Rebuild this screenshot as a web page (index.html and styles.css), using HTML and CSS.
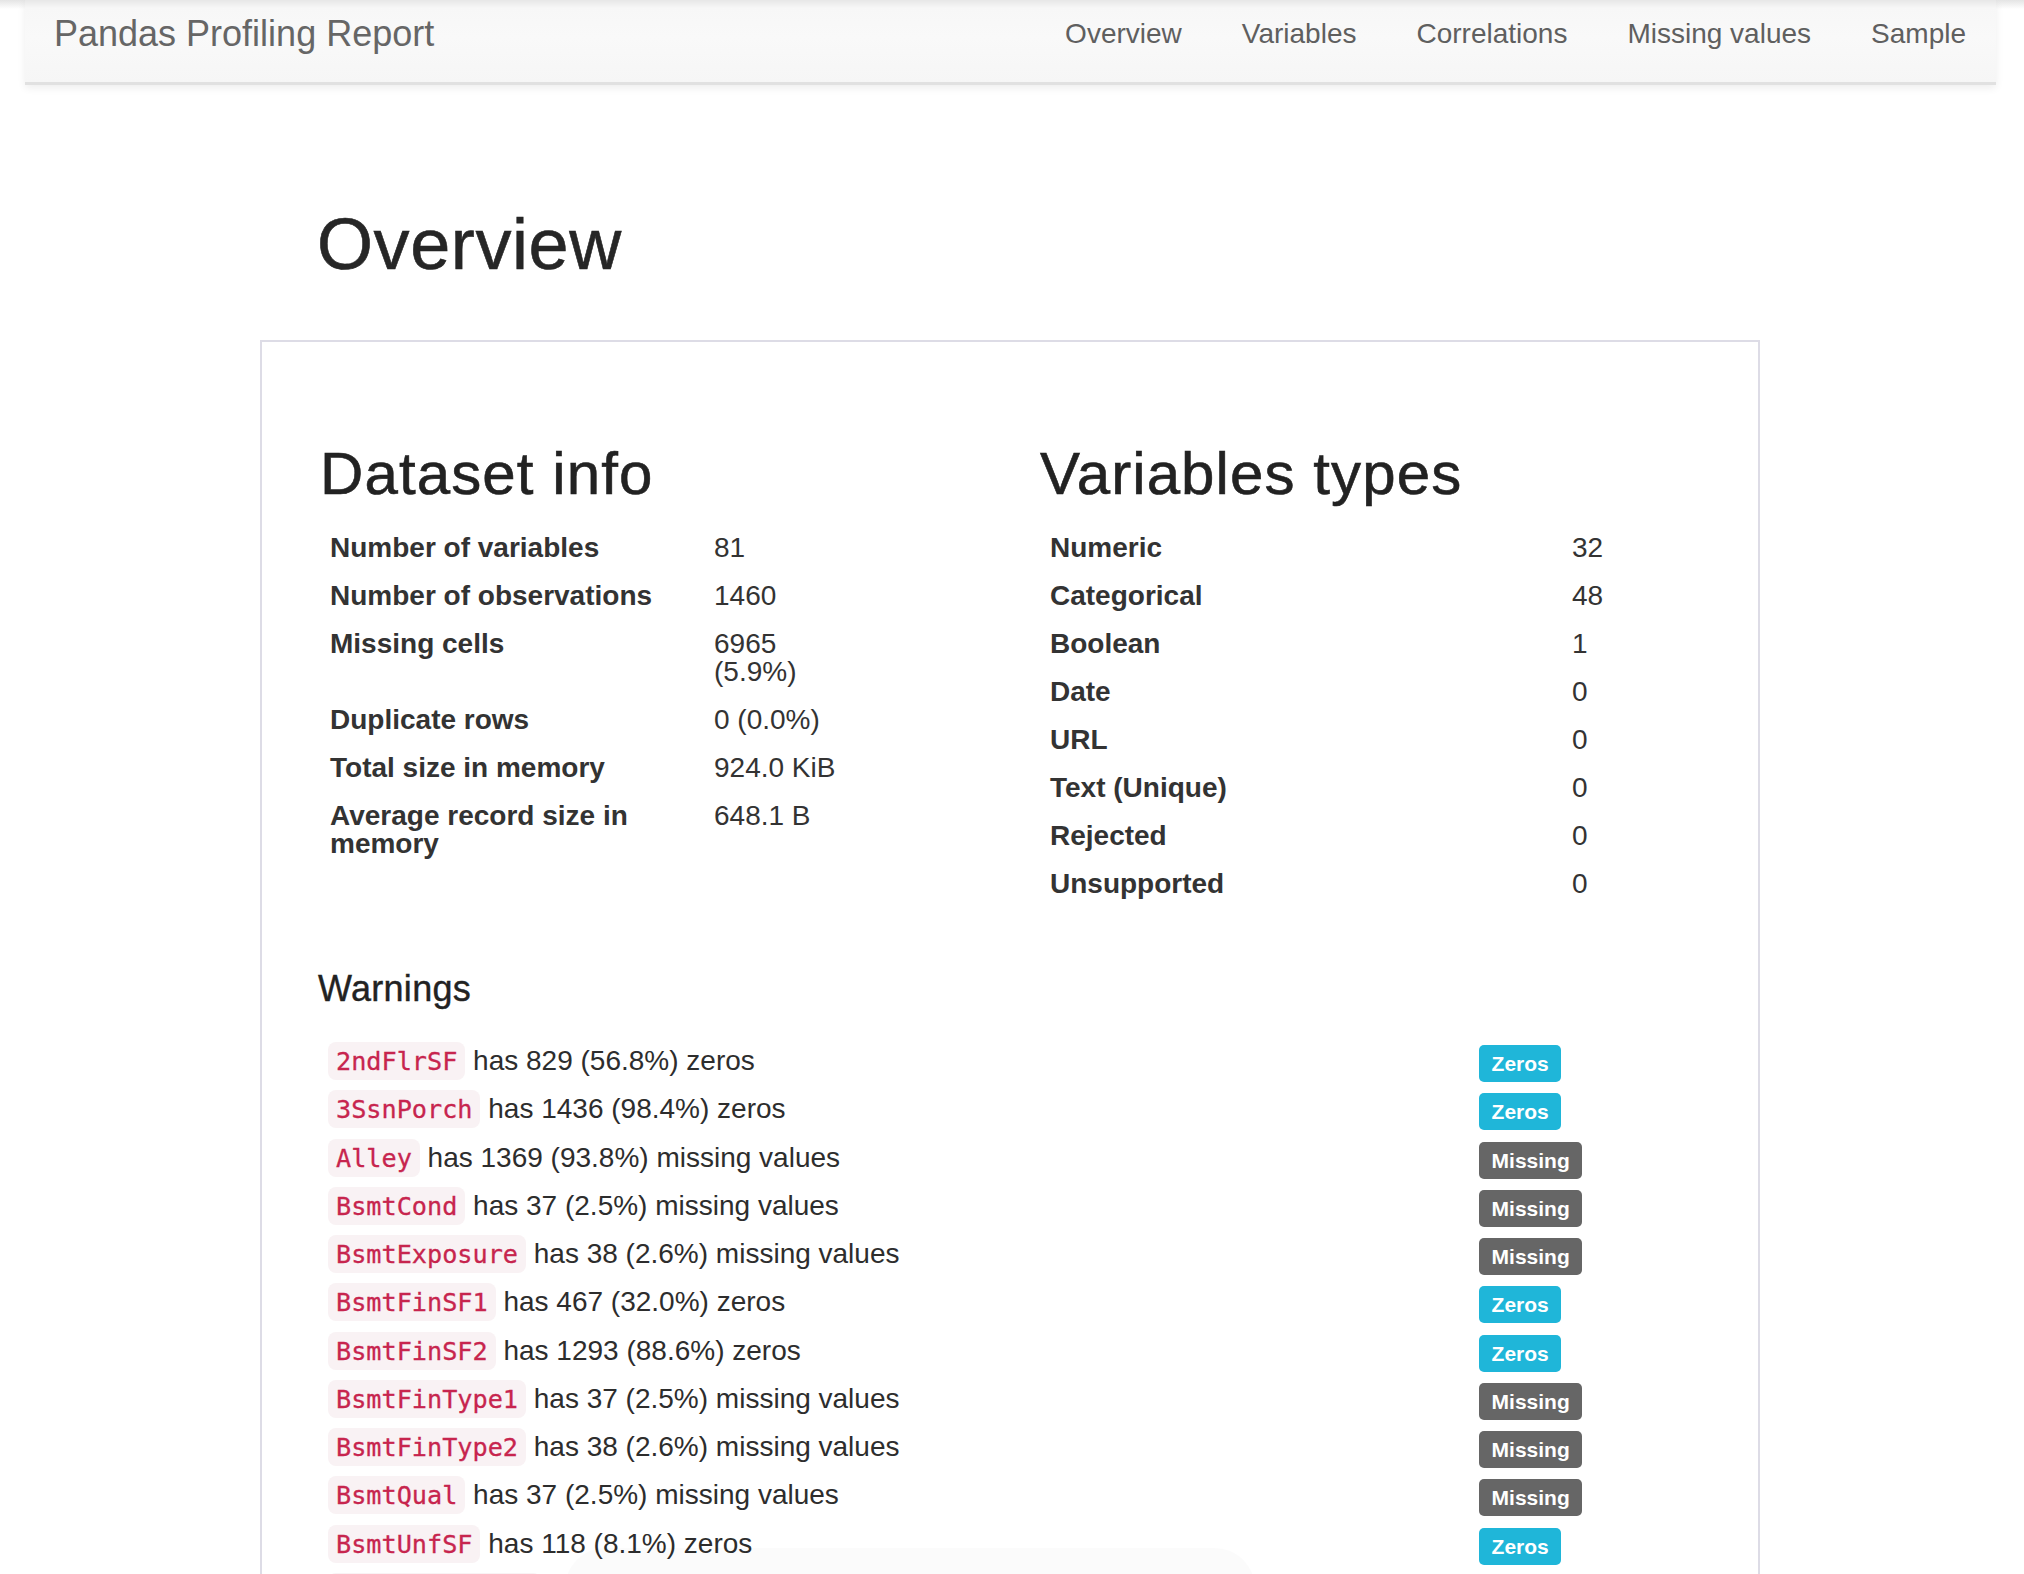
FILE: index.html
```html
<!DOCTYPE html>
<html lang="en">
<head>
<meta charset="utf-8">
<title>Pandas Profiling Report</title>
<link rel="stylesheet" href="styles.css">
</head>
<body>
<nav class="navbar">
  <a class="brand" href="#">Pandas Profiling Report</a>
  <ul class="nav">
    <li><a href="#overview">Overview</a></li>
    <li><a href="#variables">Variables</a></li>
    <li><a href="#correlations">Correlations</a></li>
    <li><a href="#missing">Missing values</a></li>
    <li><a href="#sample">Sample</a></li>
  </ul>
</nav>
<main class="content" id="overview">
  <h1 class="page-title">Overview</h1>
  <section class="panel">
    <div class="col col-left">
      <h2 class="section-title">Dataset info</h2>
      <table class="stats stats-dataset">
        <tr><th>Number of variables</th><td>81</td></tr>
        <tr><th>Number of observations</th><td>1460</td></tr>
        <tr><th>Missing cells</th><td>6965 (5.9%)</td></tr>
        <tr><th>Duplicate rows</th><td>0 (0.0%)</td></tr>
        <tr><th>Total size in memory</th><td>924.0 KiB</td></tr>
        <tr><th>Average record size in memory</th><td>648.1 B</td></tr>
      </table>
    </div>
    <div class="col col-right">
      <h2 class="section-title">Variables types</h2>
      <table class="stats stats-types">
        <tr><th>Numeric</th><td>32</td></tr>
        <tr><th>Categorical</th><td>48</td></tr>
        <tr><th>Boolean</th><td>1</td></tr>
        <tr><th>Date</th><td>0</td></tr>
        <tr><th>URL</th><td>0</td></tr>
        <tr><th>Text (Unique)</th><td>0</td></tr>
        <tr><th>Rejected</th><td>0</td></tr>
        <tr><th>Unsupported</th><td>0</td></tr>
      </table>
    </div>
    <div class="warnings">
      <h4 class="warnings-title">Warnings</h4>
      <table class="warn-table">
        <tr><td class="msg"><code>2ndFlrSF</code> has 829 (56.8%) zeros</td><td class="tag"><span class="badge badge-zeros">Zeros</span></td></tr>
        <tr><td class="msg"><code>3SsnPorch</code> has 1436 (98.4%) zeros</td><td class="tag"><span class="badge badge-zeros">Zeros</span></td></tr>
        <tr><td class="msg"><code>Alley</code> has 1369 (93.8%) missing values</td><td class="tag"><span class="badge badge-missing">Missing</span></td></tr>
        <tr><td class="msg"><code>BsmtCond</code> has 37 (2.5%) missing values</td><td class="tag"><span class="badge badge-missing">Missing</span></td></tr>
        <tr><td class="msg"><code>BsmtExposure</code> has 38 (2.6%) missing values</td><td class="tag"><span class="badge badge-missing">Missing</span></td></tr>
        <tr><td class="msg"><code>BsmtFinSF1</code> has 467 (32.0%) zeros</td><td class="tag"><span class="badge badge-zeros">Zeros</span></td></tr>
        <tr><td class="msg"><code>BsmtFinSF2</code> has 1293 (88.6%) zeros</td><td class="tag"><span class="badge badge-zeros">Zeros</span></td></tr>
        <tr><td class="msg"><code>BsmtFinType1</code> has 37 (2.5%) missing values</td><td class="tag"><span class="badge badge-missing">Missing</span></td></tr>
        <tr><td class="msg"><code>BsmtFinType2</code> has 38 (2.6%) missing values</td><td class="tag"><span class="badge badge-missing">Missing</span></td></tr>
        <tr><td class="msg"><code>BsmtQual</code> has 37 (2.5%) missing values</td><td class="tag"><span class="badge badge-missing">Missing</span></td></tr>
        <tr><td class="msg"><code>BsmtUnfSF</code> has 118 (8.1%) zeros</td><td class="tag"><span class="badge badge-zeros">Zeros</span></td></tr>
        <tr><td class="msg"><code>EnclosedPorch</code> has 1252 (85.8%) zeros</td><td class="tag"><span class="badge badge-zeros">Zeros</span></td></tr>
      </table>
    </div>
  </section>
</main>
<div class="fade-shadow"></div>
</body>
</html>
```

FILE: styles.css
```css
html {
  overflow: hidden;
}

body {
  margin: 0;
  font-family: "Liberation Sans", Arial, Helvetica, sans-serif;
  font-size: 28px;
  color: #333;
  background: #fff linear-gradient(to bottom, #e4e4e4 0, #ffffff 9px) no-repeat;
}

/* ---------- navbar ---------- */
.navbar {
  position: relative;
  z-index: 2;
  display: flex;
  align-items: flex-start;
  height: 82px;
  margin: 0 28px 0 25px;
  border-bottom: 3px solid #e1e1e1;
  background: linear-gradient(to bottom, #e7e7e7 0, #f7f7f7 8px, #f9f9f9 45%, #f6f6f6 100%);
  box-shadow: 0 3px 8px rgba(0, 0, 0, 0.07);
}

.brand {
  padding: 16px 0 0 29px;
  font-size: 36px;
  line-height: 36px;
  color: #666;
  text-decoration: none;
}

.nav {
  display: flex;
  margin: 0 0 0 auto;
  padding: 0;
  list-style: none;
}

.nav a {
  display: block;
  padding: 20px 30px 0;
  font-size: 28px;
  line-height: 28px;
  color: #5f5f5f;
  text-decoration: none;
}

/* ---------- content ---------- */
.content {
  width: 1500px;
  margin-left: 260px;
  padding-top: 120px;
}

.page-title {
  margin: 0 0 56px 57px;
  font-size: 72px;
  line-height: 79px;
  font-weight: 500;
  letter-spacing: 0.6px;
  color: #262626;
  -webkit-text-stroke: 0.6px #262626;
}

.panel {
  display: grid;
  grid-template-columns: 722px 722px;
  padding: 0 26px;
  border: 2px solid #dddce6;
}

.col {
  padding: 99px 30px 0;
}

.col-left {
  padding-left: 32px;
  padding-right: 28px;
}

.section-title {
  margin: 0 0 17px;
  font-size: 60px;
  line-height: 66px;
  font-weight: 500;
  letter-spacing: 1.1px;
  color: #222;
  -webkit-text-stroke: 0.6px #222;
}

.stats {
  border-collapse: collapse;
}

.stats th,
.stats td {
  padding: 10px;
  font-size: 28px;
  line-height: 28px;
  text-align: left;
  vertical-align: top;
}

.stats th {
  font-weight: bold;
  color: #333;
}

.stats td {
  color: #333;
}

.stats-dataset th {
  width: 364px;
}

.stats-dataset td {
  width: 130px;
}

.stats-types th {
  width: 502px;
}

.stats-types td {
  width: 120px;
}

/* ---------- warnings ---------- */
.warnings {
  grid-column: 1 / -1;
  padding: 61px 30px 0;
}

.warnings-title {
  margin: 0 0 28px;
  font-size: 36px;
  line-height: 40px;
  font-weight: 500;
  letter-spacing: 0.3px;
  color: #222;
  -webkit-text-stroke: 0.4px #222;
}

.warn-table {
  border-collapse: collapse;
  width: 1384px;
}

.warn-table td {
  height: 38.25px;
  padding: 5px 10px;
  font-size: 28px;
  line-height: 38px;
  vertical-align: top;
  white-space: nowrap;
  color: #2d2d2d;
}

.warn-table .msg {
  width: 1131px;
}

.warn-table .tag {
  padding: 8px 10px 0;
}

.warn-table code {
  display: inline-block;
  vertical-align: top;
  padding: 2px 8px 0;
  font-family: "DejaVu Sans Mono", "Liberation Mono", monospace;
  font-size: 25.2px;
  line-height: 36px;
  color: #c7254e;
  background: #f9f2f4;
  border-radius: 8px;
  -webkit-text-stroke: 0.3px #c7254e;
}

.badge {
  display: inline-block;
  vertical-align: top;
  padding: 8px 12.6px;
  font-size: 21px;
  line-height: 21px;
  font-weight: bold;
  color: #fff;
  border-radius: 5px;
}

.badge-zeros {
  background: #1fb6d9;
}

.badge-missing {
  background: #666666;
}

/* faint shadow blob at bottom edge of the screenshot */
.fade-shadow {
  position: absolute;
  left: 565px;
  top: 1548px;
  width: 690px;
  height: 60px;
  border-radius: 40px 40px 0 0;
  background: rgba(0, 0, 0, 0.014);
  pointer-events: none;
}
```
